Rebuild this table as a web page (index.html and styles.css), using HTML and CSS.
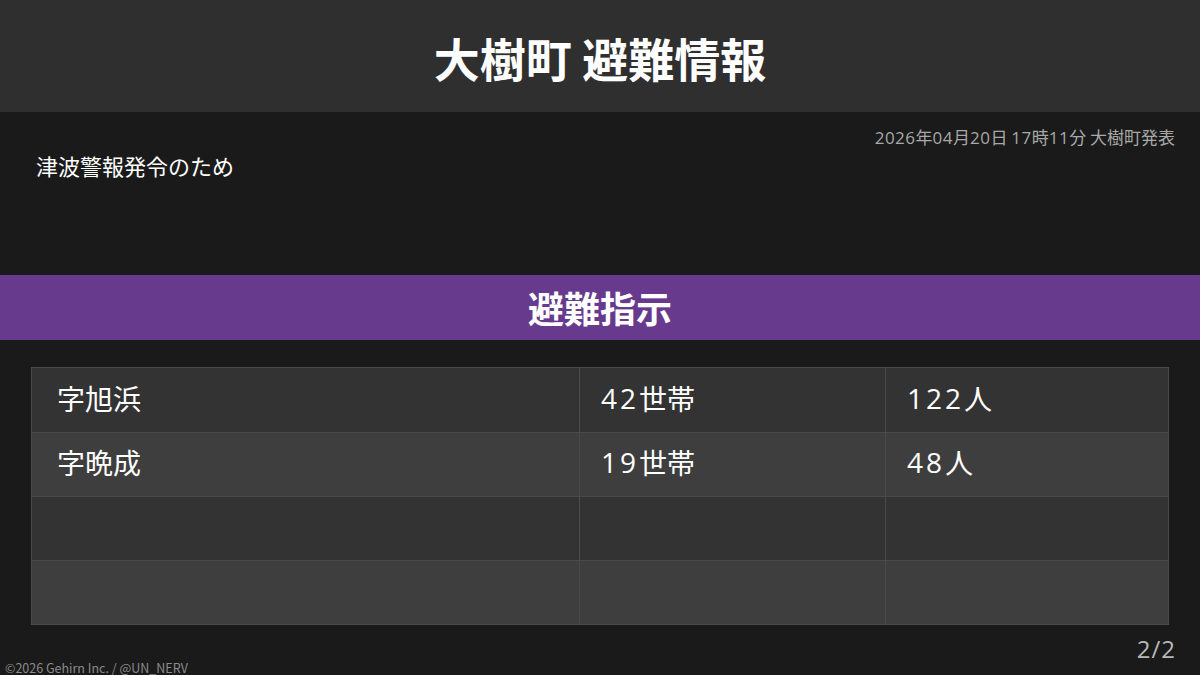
FILE: index.html
```html
<!DOCTYPE html>
<html lang="ja">
<head>
<meta charset="utf-8">
<link rel="stylesheet" href="styles.css">
</head>
<body>
<div class="page">
  <header class="header"><h1 class="title">大樹町 避難情報</h1></header>
  <section class="info">
    <div class="issued"><span class="num">2026</span>年<span class="num">04</span>月<span class="num">20</span>日 <span class="num">17</span>時<span class="num">11</span>分 大樹町発表</div>
    <div class="reason">津波警報発令のため</div>
  </section>
  <div class="band">避難指示</div>
  <div class="table-wrap">
    <div class="table">
      <div class="row odd"><div class="cell c1">字旭浜</div><div class="cell c2"><span class="num">42</span>世帯</div><div class="cell c3"><span class="num">122</span>人</div></div>
      <div class="row even"><div class="cell c1">字晩成</div><div class="cell c2"><span class="num">19</span>世帯</div><div class="cell c3"><span class="num">48</span>人</div></div>
      <div class="row odd"><div class="cell c1"></div><div class="cell c2"></div><div class="cell c3"></div></div>
      <div class="row even"><div class="cell c1"></div><div class="cell c2"></div><div class="cell c3"></div></div>
    </div>
  </div>
  <div class="page-no"><span class="num">2/2</span></div>
  <div class="copyright">©2026 Gehirn Inc. / @UN_NERV</div>
</div>
</body>
</html>
```
FILE: styles.css
```css
html, body {
  margin: 0;
  padding: 0;
  background: #1a1a1a;
}
body {
  font-family: "Noto Sans CJK JP", "Noto Sans", sans-serif;
  color: #fff;
}
.page {
  width: 1200px;
  height: 675px;
  display: flex;
  flex-direction: column;
}
.page > * { flex-shrink: 0; }
.num {
  font-family: "Open Sans", "Noto Sans", sans-serif;
}
.header {
  height: 112px;
  background: #2f2f2f;
  display: flex;
  align-items: center;
  justify-content: center;
  box-sizing: border-box;
  padding-top: 2px;
}
.title {
  margin: 0;
  font-size: 46px;
  font-weight: 700;
  line-height: 1;
  letter-spacing: 0;
}
.info {
  height: 163px;
  display: flex;
  flex-direction: column;
  padding: 14px 25px 0 36px;
  box-sizing: border-box;
}
.issued {
  align-self: flex-end;
  font-size: 17px;
  color: #a8a8a8;
  line-height: 22px;
}
.issued .num { letter-spacing: 0.5px; }
.reason {
  margin-top: 2px;
  font-size: 22px;
  line-height: 28px;
  color: #fff;
}
.band {
  height: 65px;
  background: #673a8e;
  display: flex;
  align-items: center;
  justify-content: center;
  font-size: 36px;
  font-weight: 700;
  line-height: 1;
  box-sizing: border-box;
  padding-bottom: 2px;
}
.table-wrap {
  padding: 27px 31px 0 31px;
}
.table {
  border: 1px solid #4a4a4a;
  display: flex;
  flex-direction: column;
}
.row {
  display: grid;
  grid-template-columns: 547px 306px 1fr;
  height: 64px;
  box-sizing: border-box;
  border-top: 1px solid #4a4a4a;
}
.row:first-child { border-top: none; }
.row.odd { background: #333333; }
.row.even { background: #3e3e3e; }
.cell {
  display: flex;
  align-items: center;
  font-size: 28px;
  line-height: 1;
  padding-bottom: 5px;
  box-sizing: border-box;
}
.cell .num { letter-spacing: 3px; }
.c1 { padding-left: 25px; }
.c2 { padding-left: 21px; border-left: 1px solid #4a4a4a; }
.c3 { padding-left: 21px; border-left: 1px solid #4a4a4a; }
.page-no {
  align-self: flex-end;
  margin: 11px 25px 0 0;
  font-size: 24px;
  line-height: 24px;
  color: #b8b8b8;
}
.page-no .num { letter-spacing: 1px; margin-right: -1px; }
.copyright {
  margin-left: 5px;
  font-size: 12.5px;
  line-height: 13px;
  color: #8a8a8a;
}
```
